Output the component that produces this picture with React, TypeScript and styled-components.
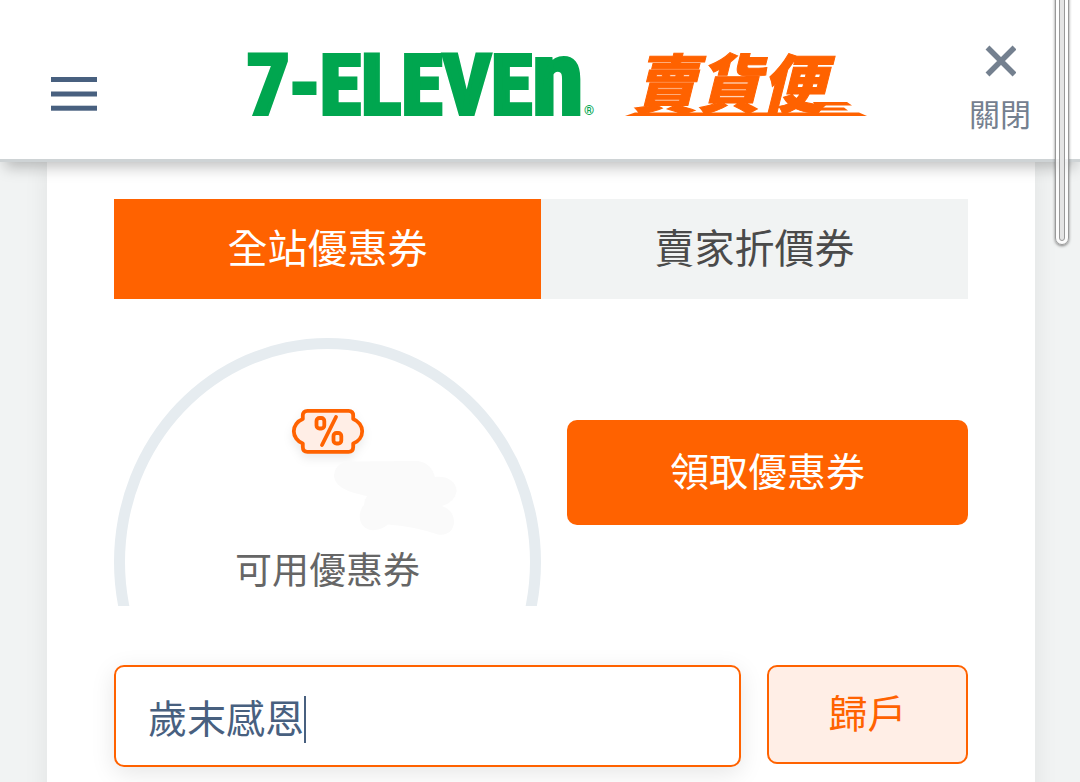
import React, { useState } from "react";
import styled, { createGlobalStyle } from "styled-components";

const orange = "#ff6200";
const green = "#00a64f";

const GlobalStyle = createGlobalStyle`
  *, *::before, *::after { box-sizing: border-box; }
  body {
    margin: 0;
    background: #f1f3f3;
    font-family: "Noto Sans CJK TC", "Noto Sans", sans-serif;
    overflow: hidden;
  }
  button, input { font-family: inherit; }
`;

const Page = styled.div`
  position: relative;
  min-height: 100vh;
  overflow: hidden;
`;

const Header = styled.header`
  position: relative;
  z-index: 2;
  display: grid;
  grid-template-columns: auto 1fr auto;
  align-items: center;
  height: 162px;
  padding: 0 49px 0 51px;
  background: #fff;
  border-bottom: 3px solid #ced3d5;
  box-shadow: 0 10px 14px -5px rgba(0, 0, 0, 0.25);
`;

const IconButton = styled.button`
  display: flex;
  flex-direction: column;
  align-items: center;
  padding: 0;
  border: 0;
  background: none;
  color: #74808f;
  font-size: 31px;
  line-height: 40px;
`;

const MenuButton = styled(IconButton)`
  margin-top: 28px;
`;

const CloseButton = styled(IconButton)`
  gap: 16px;
  margin-top: 18px;
`;

const Brand = styled.a`
  display: flex;
  justify-content: center;
  padding-left: 48px;
  margin-top: 8px;
`;

const Card = styled.main`
  margin: 0 45px 0 47px;
  padding: 37px 67px 40px;
  min-height: 640px;
  background: #fff;
  box-shadow: 0 0 24px rgba(0, 0, 0, 0.07);
`;

const Tabs = styled.div`
  display: grid;
  grid-template-columns: 1fr 1fr;
`;

const Tab = styled.button<{ $active: boolean }>`
  height: 100px;
  padding: 0 0 6px;
  border: 0;
  background: ${(p) => (p.$active ? orange : "#f1f3f3")};
  color: ${(p) => (p.$active ? "#fff" : "#4a4a4a")};
  font-size: 40px;
  line-height: 60px;
`;

const Summary = styled.section`
  display: grid;
  grid-template-columns: 1fr 1fr;
  align-items: center;
  margin-top: 39px;
`;

const RingClip = styled.div`
  height: 268px;
  overflow: hidden;
`;

const Ring = styled.div`
  position: relative;
  display: flex;
  flex-direction: column;
  align-items: center;
  height: 448px;
  padding-top: 60px;
  border: 11px solid #e6ecf0;
  border-radius: 50%;
`;

const CouponSvg = styled.svg`
  overflow: visible;
  filter: drop-shadow(0 5px 5px rgba(0, 0, 0, 0.08));
`;

const Smudge = styled.svg`
  position: absolute;
  top: 111px;
  left: 50%;
`;

const RingLabel = styled.p`
  margin: 84px 0 0;
  color: #666;
  font-size: 37px;
  line-height: 60px;
`;

const ClaimButton = styled.button`
  height: 105px;
  margin-left: 26px;
  padding: 0 0 6px;
  border: 0;
  border-radius: 10px;
  background: ${orange};
  color: #fff;
  font-size: 39px;
  line-height: 60px;
`;

const RedeemForm = styled.form`
  display: grid;
  grid-template-columns: 1fr 201px;
  align-items: start;
  gap: 26px;
  margin-top: 59px;
`;

const Field = styled.div`
  position: relative;
`;

const CodeInput = styled.input`
  display: block;
  width: 100%;
  height: 102px;
  padding: 0 32px;
  border: 2px solid ${orange};
  border-radius: 10px;
  outline: 0;
  background: #fff;
  box-shadow: 0 6px 24px rgba(0, 0, 0, 0.1);
  color: #48607f;
  font-size: 39px;
  line-height: 60px;
`;

const Caret = styled.span`
  position: absolute;
  top: 31px;
  left: 190px;
  width: 2px;
  height: 47px;
  background: #48607f;
`;

const RedeemButton = styled.button`
  height: 99px;
  padding: 0 0 8px;
  border: 2px solid ${orange};
  border-radius: 10px;
  background: #ffeee6;
  color: ${orange};
  font-size: 39px;
  line-height: 60px;
`;

const ScrollThumb = styled.div`
  position: absolute;
  z-index: 3;
  top: -20px;
  right: 11px;
  width: 14px;
  height: 265px;
  padding: 3px;
  border: 1px solid #999;
  border-radius: 7px;
  background: rgba(255, 255, 255, 0.75);
  box-shadow: 0 1px 3px rgba(0, 0, 0, 0.5);

  &::after {
    content: "";
    display: block;
    height: 100%;
    border: 1px solid #999;
    border-radius: 3px;
    background: #e4e4e4;
  }
`;

const MenuIcon = () => (
  <svg width="46" height="36" viewBox="0 0 46 36" fill="#48607f" aria-hidden="true">
    <rect y="1" width="46" height="5" />
    <rect y="15.5" width="46" height="5" />
    <rect y="29.7" width="46" height="5" />
  </svg>
);

const CloseIcon = () => (
  <svg width="32" height="32" viewBox="0 0 32 32" stroke="#74808f" strokeWidth="5.500" aria-hidden="true">
    <path d="M3.500 2.500 30.500 29.500M30.500 2.500 3.500 29.500" />
  </svg>
);

const BrandLogo = () => (
  <svg width="620" height="90" viewBox="0 0 620 90" overflow="visible" role="img" aria-label="7-ELEVEN 賣貨便">
    <g
      fill={green}
      stroke={green}
      fontFamily='"Roboto Condensed", "Open Sans Condensed", "Noto Sans Condensed", "Liberation Sans", sans-serif'
      fontWeight="700"
    >
      <text x="0" y="75" fontSize="84" strokeWidth="4">
        7-ELEVE<tspan fontSize="104">n</tspan>
      </text>
      <text x="337" y="76" fontSize="13" strokeWidth="0">®</text>
    </g>
    <g fill={orange}>
      <text
        x="386"
        y="69"
        fontSize="64"
        fontWeight="900"
        fontStyle="italic"
        stroke={orange}
        strokeWidth="1"
        fontFamily='"Noto Sans CJK TC", sans-serif'
      >
        賣貨便
      </text>
      <path d="M378 77 388 73.500H612L620 77Z" />
      <path d="M566 63H600L605 66.500H568ZM568 68.500H597L601 71.500H572Z" />
    </g>
  </svg>
);

const CouponIcon = () => (
  <CouponSvg width="72" height="45" viewBox="0 0 72 45" fill="none" stroke={orange} strokeWidth="3.800" strokeLinejoin="round" strokeLinecap="round" aria-hidden="true">
    <path
      fill="#ffeee6"
      d="M15.500 1.800H56.500Q61.200 1.800 61.200 6.500V10C66.500 12 70.200 17 70.200 22.300S66.500 32.500 61.200 34.500V38Q61.200 42.800 56.500 42.800H15.500Q10.800 42.800 10.800 38V34.500C5.500 32.500 1.800 27.500 1.800 22.300S5.500 12 10.800 10V6.500Q10.800 1.800 15.500 1.800Z"
    />
    <rect x="24.500" y="9" width="7.800" height="10.500" rx="3" />
    <rect x="41.500" y="24" width="7.800" height="10.500" rx="3" />
    <path d="M44 8 30 36" />
  </CouponSvg>
);

const tabs = ["全站優惠券", "賣家折價券"];

export default function App() {
  const [active, setActive] = useState(0);
  const [code, setCode] = useState("歲末感恩");

  return (
    <Page>
      <GlobalStyle />
      <Header>
        <MenuButton type="button" aria-label="選單">
          <MenuIcon />
        </MenuButton>
        <Brand href="#">
          <BrandLogo />
        </Brand>
        <CloseButton type="button">
          <CloseIcon />
          關閉
        </CloseButton>
      </Header>

      <Card>
        <Tabs role="tablist">
          {tabs.map((name, i) => (
            <Tab key={name} type="button" role="tab" aria-selected={active === i} $active={active === i} onClick={() => setActive(i)}>
              {name}
            </Tab>
          ))}
        </Tabs>

        <Summary>
          <RingClip>
            <Ring>
              <CouponIcon />
              <Smudge width="130" height="76" viewBox="328 460 130 76" fill="#fafafa" aria-hidden="true">
                <path d="M347 461.500 418 461Q431 463 435 477C447 475 456.700 482 456.700 491Q455 502 442 506Q454 511 454 521.500C454 531 447 536 438 534.500Q412 526 388 524.500C375 535 359.700 530 359.700 516.500Q360 509 364 505 364 500 367 496C352 493 334 488 334 475Q335 464 347 461.500Z" />
              </Smudge>
              <RingLabel>可用優惠券</RingLabel>
            </Ring>
          </RingClip>
          <ClaimButton type="button">領取優惠券</ClaimButton>
        </Summary>

        <RedeemForm onSubmit={(e) => e.preventDefault()}>
          <Field>
            <CodeInput aria-label="優惠代碼" value={code} onChange={(e) => setCode(e.target.value)} />
            <Caret />
          </Field>
          <RedeemButton type="submit">歸戶</RedeemButton>
        </RedeemForm>
      </Card>

      <ScrollThumb />
    </Page>
  );
}
